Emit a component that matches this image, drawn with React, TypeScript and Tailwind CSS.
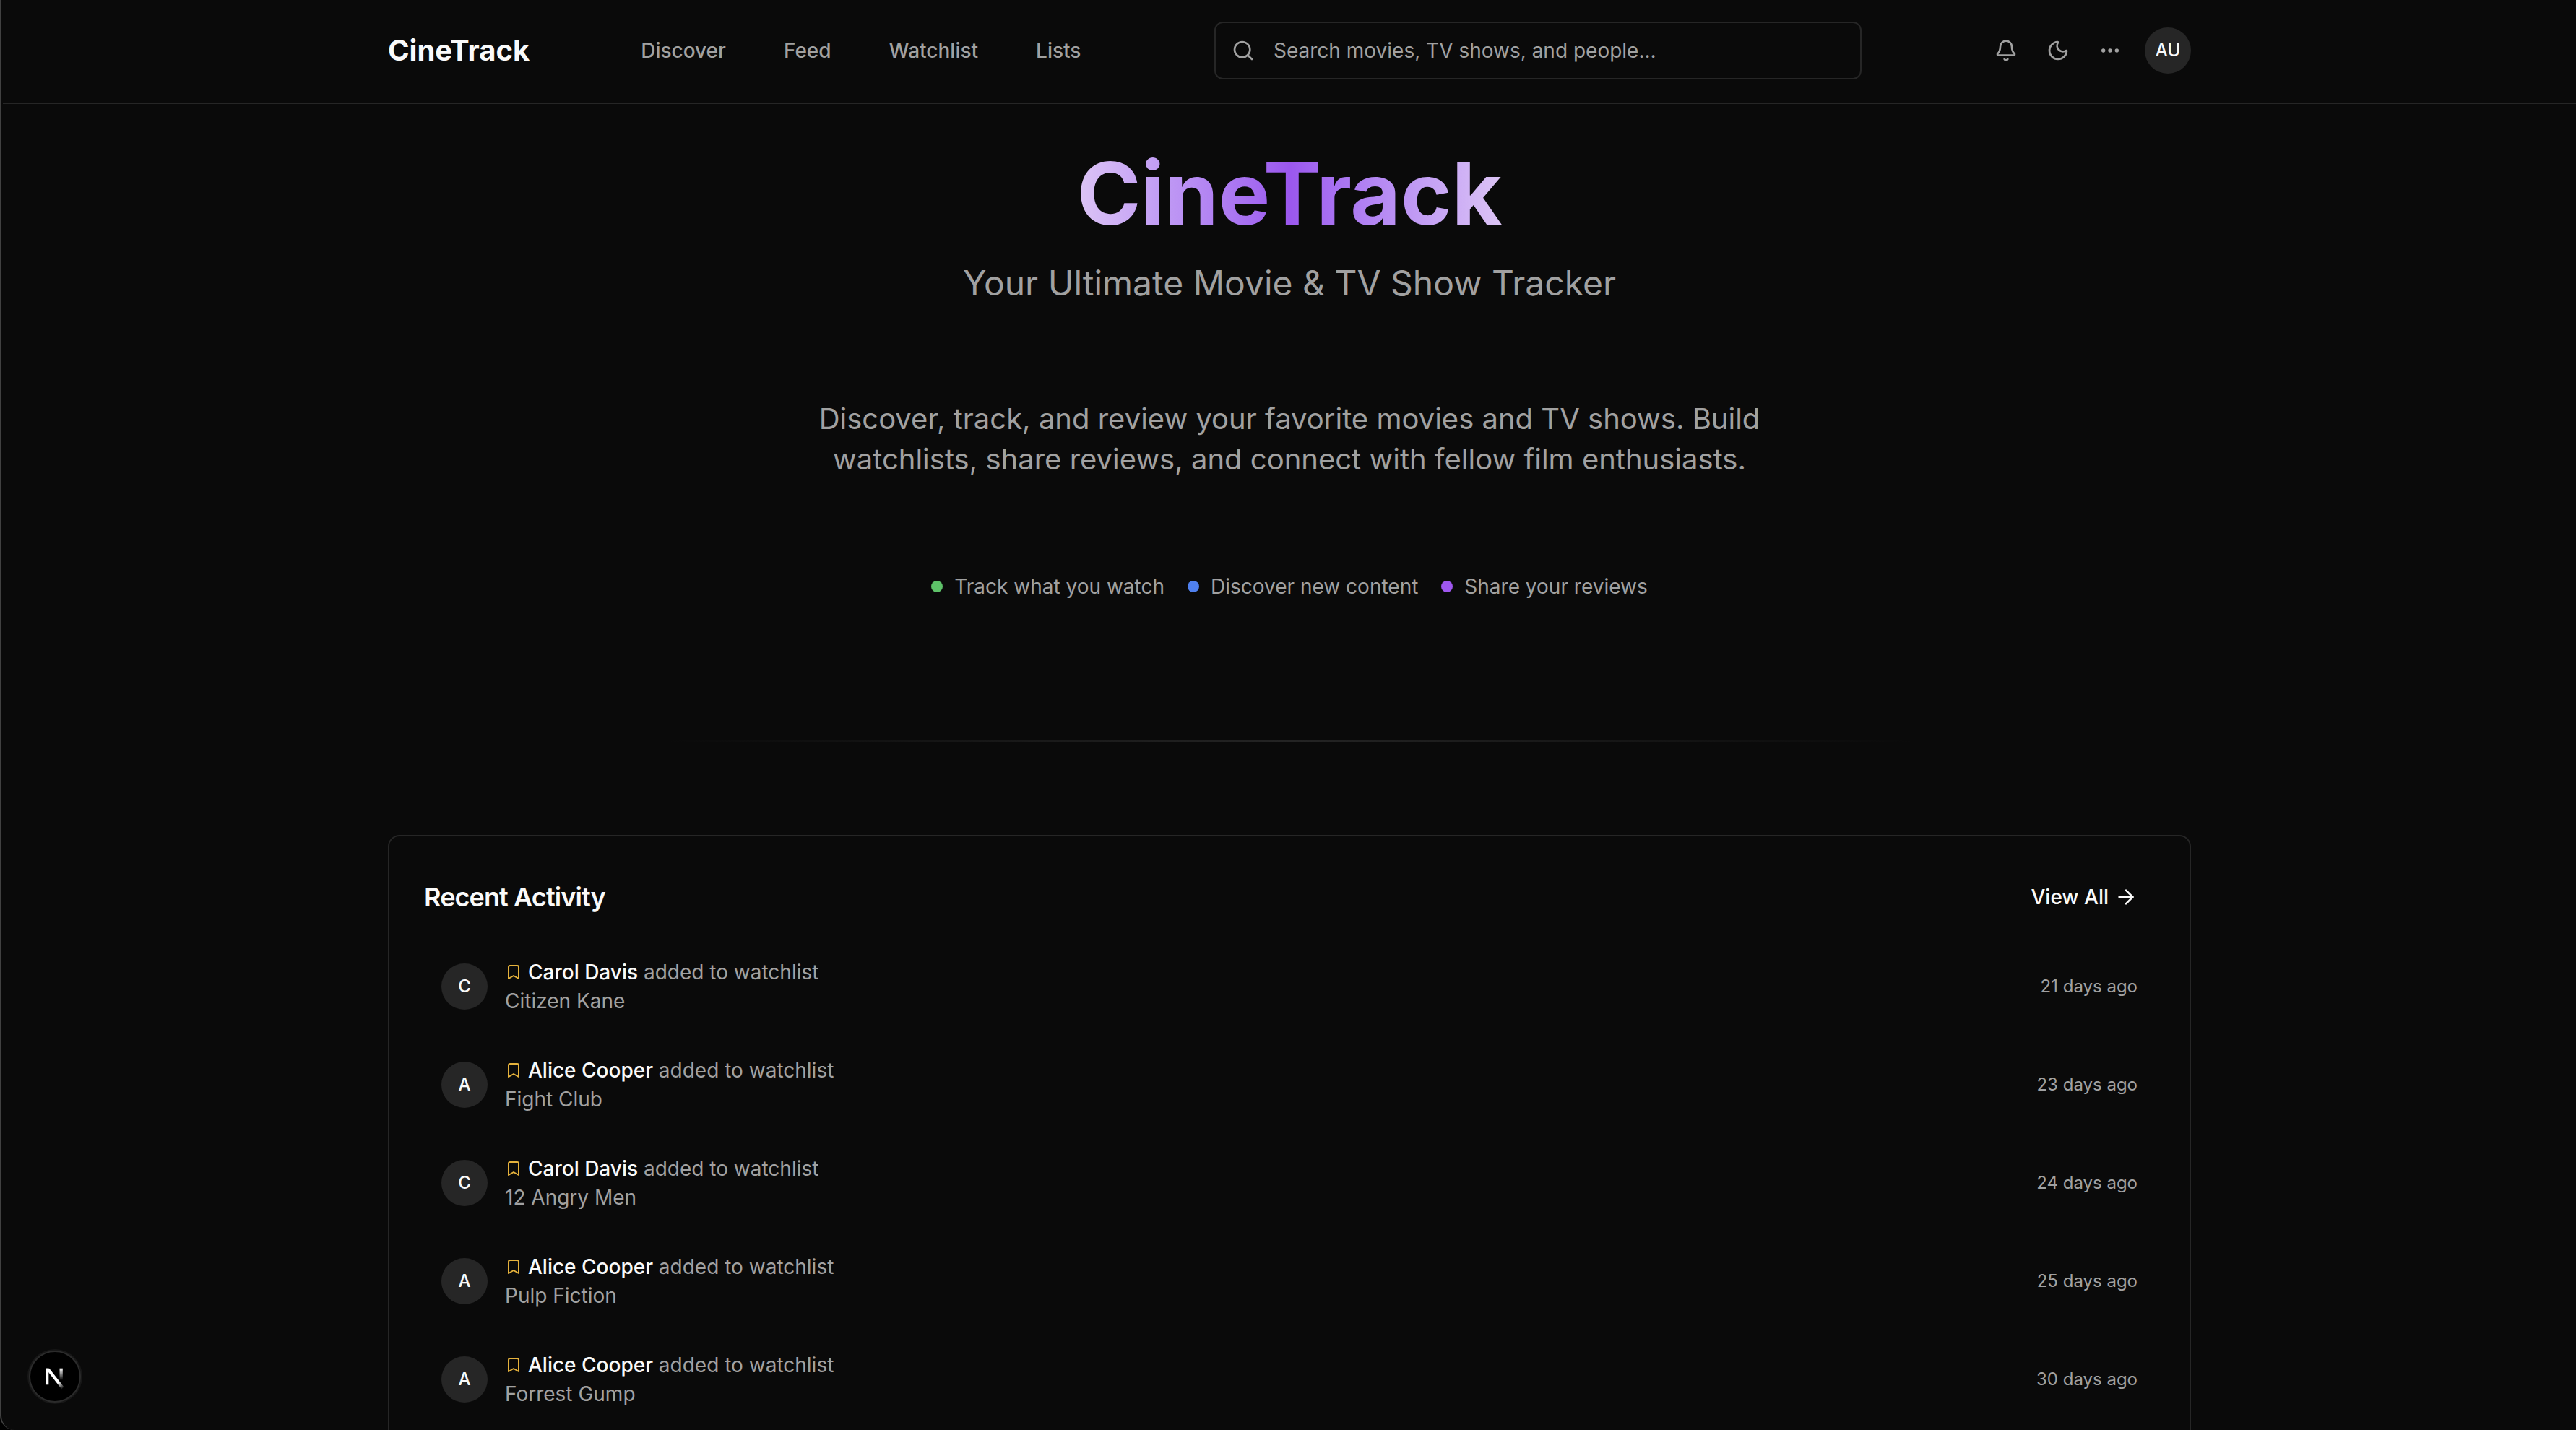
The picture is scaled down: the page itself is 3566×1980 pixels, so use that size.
import type { ReactNode } from "react";
import { ArrowRight, Bell, Bookmark, Ellipsis, Moon, Search } from "lucide-react";

const navLinks = ["Discover", "Feed", "Watchlist", "Lists"];

const features = [
  { label: "Track what you watch", dot: "bg-[#5ec269]" },
  { label: "Discover new content", dot: "bg-[#4f80ee]" },
  { label: "Share your reviews", dot: "bg-[#9f57ef]" },
];

const activities = [
  { name: "Carol Davis", title: "Citizen Kane", when: "21 days ago" },
  { name: "Alice Cooper", title: "Fight Club", when: "23 days ago" },
  { name: "Carol Davis", title: "12 Angry Men", when: "24 days ago" },
  { name: "Alice Cooper", title: "Pulp Fiction", when: "25 days ago" },
  { name: "Alice Cooper", title: "Forrest Gump", when: "30 days ago" },
];

function IconButton({ label, children }: { label: string; children: ReactNode }) {
  return (
    <button type="button" aria-label={label} className="flex size-16 items-center justify-center rounded-xl">
      {children}
    </button>
  );
}

function Header() {
  return (
    <header className="border-b-2 border-[#262626]">
      <div className="mx-auto flex max-w-[2560px] items-center px-8 pt-[30px] pb-8">
        <a href="#" className="text-[40px] leading-[56px] font-bold text-[#fafafa]">
          CineTrack
        </a>
        <nav className="ml-[154px] flex gap-20 text-[28px] leading-10 font-medium text-[#a1a1a1]">
          {navLinks.map((link) => (
            <a key={link} href="#">
              {link}
            </a>
          ))}
        </nav>
        <div className="ml-auto flex items-center">
          <label className="mr-[168px] flex h-20 w-[896px] items-center gap-[26px] rounded-xl border-2 border-[#262626] px-[22px] text-[#a1a1a1]">
            <Search className="size-8 shrink-0" aria-hidden />
            <input
              type="search"
              aria-label="Search"
              placeholder="Search movies, TV shows, and people..."
              className="min-w-0 flex-1 bg-transparent text-[28px] leading-10 text-[#fafafa] outline-none placeholder:text-[#a1a1a1]"
            />
          </label>
          <div className="flex items-center gap-2 text-[#a1a1a1]">
            <IconButton label="Notifications">
              <Bell className="size-8" />
            </IconButton>
            <IconButton label="Toggle theme">
              <Moon className="size-8" />
            </IconButton>
            <IconButton label="More">
              <Ellipsis className="size-8" />
            </IconButton>
            <button
              type="button"
              className="ml-2 flex size-16 items-center justify-center rounded-full bg-[#262626] text-[24px] leading-8 font-medium text-[#fafafa]"
            >
              AU
            </button>
          </div>
        </div>
      </div>
    </header>
  );
}

function Hero() {
  return (
    <section className="flex flex-col items-center text-center text-[#a1a1a1]">
      <h1 className="bg-linear-to-r from-[#dcc4f5] via-[#9b57ee] to-[#dcc4f5] bg-clip-text text-[120px] leading-[120px] font-bold text-transparent">
        CineTrack
      </h1>
      <p className="mt-8 text-[48px] leading-[64px]">Your Ultimate Movie &amp; TV Show Tracker</p>
      <p className="mt-32 max-w-[1344px] text-[40px] leading-[56px]">
        Discover, track, and review your favorite movies and TV shows. Build watchlists, share reviews, and connect with
        fellow film enthusiasts.
      </p>
      <ul className="mt-32 flex gap-8 text-[28px] leading-10">
        {features.map((feature) => (
          <li key={feature.label} className="flex items-center gap-4">
            <span className={`size-4 rounded-full ${feature.dot}`} />
            {feature.label}
          </li>
        ))}
      </ul>
    </section>
  );
}

function RecentActivity() {
  return (
    <section className="rounded-2xl border-2 border-[#262626] p-12">
      <div className="flex items-center justify-between text-[#fafafa]">
        <h2 className="text-[36px] leading-[56px] font-semibold tracking-tight">Recent Activity</h2>
        <a href="#" className="flex h-[72px] items-center gap-2 px-6 text-[28px] leading-10 font-medium">
          View All
          <ArrowRight className="size-8" />
        </a>
      </div>
      <ul className="mt-6 flex flex-col gap-2">
        {activities.map((activity) => (
          <li key={activity.title} className="flex items-center gap-6 p-6">
            <span className="flex size-16 shrink-0 items-center justify-center rounded-full bg-[#262626] text-[24px] leading-8 font-medium text-[#fafafa]">
              {activity.name[0]}
            </span>
            <div className="flex-1 text-[28px] leading-10 text-[#a1a1a1]">
              <div className="flex items-center gap-2">
                <Bookmark className="size-6 text-[#e5b23c]" />
                <p>
                  <a href="#" className="font-medium text-[#fafafa]">
                    {activity.name}
                  </a>{" "}
                  added to watchlist
                </p>
              </div>
              <p>{activity.title}</p>
            </div>
            <time className="text-[24px] leading-8 text-[#a1a1a1]">{activity.when}</time>
          </li>
        ))}
      </ul>
    </section>
  );
}

function DevIndicator() {
  return (
    <button
      type="button"
      aria-label="Open developer tools"
      className="fixed bottom-[38px] left-10 flex size-[72px] items-center justify-center rounded-full border-2 border-[#2b2b2b] bg-black ring-2 ring-[#171717]"
    >
      <svg viewBox="0 0 40 40" className="size-10" fill="none" aria-hidden>
        <defs>
          <linearGradient id="diagonal" x1="18" y1="20" x2="31" y2="37" gradientUnits="userSpaceOnUse">
            <stop offset="0.5" stopColor="white" />
            <stop offset="1" stopColor="white" stopOpacity="0" />
          </linearGradient>
          <linearGradient id="stem" x1="28" y1="9" x2="28" y2="25" gradientUnits="userSpaceOnUse">
            <stop stopColor="white" />
            <stop offset="1" stopColor="white" stopOpacity="0" />
          </linearGradient>
        </defs>
        <path d="M7 8.7H11.3V31.3H7Z" fill="white" />
        <path d="M7 8.7H12.2L32.5 34.5L29.3 37.4L7 8.7Z" fill="url(#diagonal)" />
        <path d="M26.5 8.7H30.8V25H26.5Z" fill="url(#stem)" />
      </svg>
    </button>
  );
}

export default function App() {
  return (
    <div className="h-screen overflow-hidden bg-black font-['Inter',sans-serif] antialiased">
      <div className="h-full overflow-hidden rounded-bl-[20px] border-l-2 border-[#414141] bg-[#0a0a0a] pl-[2px]">
        <Header />
        <main className="mx-auto max-w-[2560px] px-8 pt-16">
          <Hero />
          <div className="mx-auto mt-48 mb-32 h-1 max-w-[1728px] bg-linear-to-r from-transparent via-[#242424] to-transparent" />
          <RecentActivity />
        </main>
      </div>
      <DevIndicator />
    </div>
  );
}
